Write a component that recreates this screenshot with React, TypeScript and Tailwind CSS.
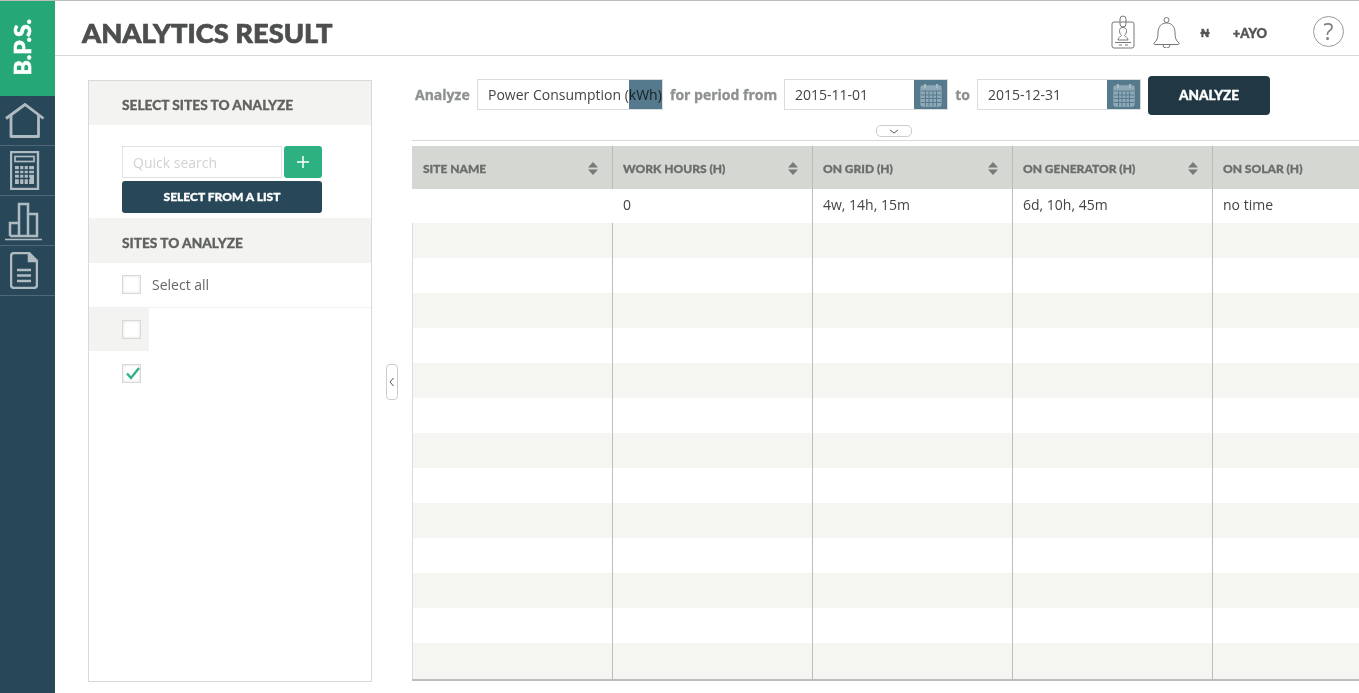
const heading = "font-['Lato','Liberation_Sans',sans-serif]";
const body = "font-['Open_Sans','Liberation_Sans',sans-serif]";

const HomeIcon = () => (
  <svg width="40" height="36" viewBox="0 0 40 36" fill="none" stroke="#b0bbc1" strokeWidth="2.800">
    <path d="M1 15.5 20 1.500l18.500 14" />
    <path d="M6 12v21.500h27.500V12" strokeLinejoin="round" />
  </svg>
);

const CalculatorIcon = () => (
  <svg width="30" height="39" viewBox="0 0 30 39" fill="none" stroke="#b0bbc1" strokeWidth="2.400">
    <rect x="1" y="1" width="27" height="37" />
    <rect x="5" y="5.500" width="19" height="5" strokeWidth="1.700" />
    <path d="M5 15h19v18H5z" fill="#b0bbc1" stroke="none" />
    <path d="M5 19h19M5 23h19M5 27.500h19M9.500 15v18M14 15v18M18.500 15v18" stroke="#28485a" strokeWidth="1.300" />
    <path d="M22 24v9" stroke="#b0bbc1" strokeWidth="4" />
  </svg>
);

const ChartIcon = () => (
  <svg width="38" height="40" viewBox="0 0 38 40" fill="none" stroke="#b0bbc1" strokeWidth="2.500">
    <path d="M5 35V22h9M14 35V3h9v32M23 13h9v22H5" />
    <path d="M0 38.500h37" strokeWidth="1.600" />
  </svg>
);

const DocumentIcon = () => (
  <svg width="28" height="37" viewBox="0 0 28 37" fill="none" stroke="#b0bbc1" strokeWidth="2.500">
    <path d="M4 1h15l8 8v24a3 3 0 0 1-3 3H4a3 3 0 0 1-3-3V4a3 3 0 0 1 3-3z" strokeLinejoin="round" />
    <path d="M19 1v8h8" fill="#b0bbc1" />
    <path d="M7 18h14M7 23.500h14M7 29h14" />
  </svg>
);

const BadgeIcon = () => (
  <svg width="24" height="34" viewBox="0 0 24 34" fill="none" stroke="#777" strokeWidth="1">
    <rect x="1" y="7" width="22" height="26" rx="2" />
    <rect x="9" y="1" width="6" height="11" rx="3" />
    <path d="M4 27.500h16M8 30h3M14 30h3" />
    <path d="M7 25c0-3 3-3 3.500-4.500-1.500-1.500-2-3-2-5 0-2 1.500-3 3.500-3s3.500 1 3.500 3c0 2-.5 3.500-2 5 .5 1.500 3.500 1.500 3.500 4.500z" />
  </svg>
);

const BellIcon = () => (
  <svg width="27" height="32" viewBox="0 0 27 32" fill="none" stroke="#777" strokeWidth="1">
    <path d="M1 27c3-2.500 4-5 4-10 0-6 3-10 8.500-10S22 11 22 17c0 5 1 7.500 4 10 .5 1-.5 1.500-1 1.500H2c-.5 0-1.500-.5-1-1.500z" />
    <circle cx="13.500" cy="4" r="2.500" />
    <path d="M10 29a3.500 3 0 0 0 7 0" />
  </svg>
);

const CalendarIcon = () => (
  <svg width="22" height="24" viewBox="0 0 22 24" fill="none" stroke="#a5bac6" strokeWidth="1.300">
    <rect x="1" y="3" width="20" height="20" rx="1.500" fill="#8fa9b7" stroke="#8fa9b7" />
    <path d="M1 8h20M1 12h20M1 15.500h20M1 19.500h20M5.500 8v15M9 8v15M13 8v15M16.500 8v15" stroke="#567a8d" strokeWidth="1" />
    <path d="M5 1v4M17 1v4" stroke="#a5bac6" strokeWidth="2" />
  </svg>
);

const SortIcon = () => (
  <svg width="10" height="13" viewBox="0 0 10 13" fill="#777a76" className="shrink-0">
    <path d="M5 0l5 5.500H0zM5 13l5-5.500H0z" />
  </svg>
);

const Chevron = ({ d, w, h }: { d: string; w: number; h: number }) => (
  <svg width={w} height={h} viewBox={`0 0 ${w} ${h}`} fill="none" stroke="#555" strokeWidth="1">
    <path d={d} />
  </svg>
);

const Checkbox = ({ checked }: { checked?: boolean }) => (
  <div className="relative w-[19px] h-[19px] bg-white border border-[#d8d8d8] shadow-[inset_0_0_3px_#dcdcdc]">
    {checked && (
      <svg className="absolute left-[3px] top-[2px]" width="14" height="13" viewBox="0 0 14 13" fill="none" stroke="#2eb184" strokeWidth="2.400">
        <path d="M1 6.500l4 4.500 8-10" />
      </svg>
    )}
  </div>
);

const DateInput = ({ value }: { value: string }) => (
  <div className={`flex w-[164px] h-[31px] bg-white border border-[#dcdcdc] ${body}`}>
    <div className="flex-1 pl-[10px] text-[14px] leading-[29px] text-[#444]">{value}</div>
    <div className="w-[33px] bg-[#567a8d] flex items-center justify-center">
      <CalendarIcon />
    </div>
  </div>
);

const navItems = [
  { icon: <HomeIcon />, key: 'home', pad: 'pl-[5px]' },
  { icon: <CalculatorIcon />, key: 'calc', pad: 'pl-[10px]' },
  { icon: <ChartIcon />, key: 'chart', pad: 'pl-[5px]' },
  { icon: <DocumentIcon />, key: 'doc', pad: 'pl-[10px]' },
];

const columns = [
  { title: 'SITE NAME', w: 'w-[201px] pl-[11px]', value: '' },
  { title: 'WORK HOURS (H)', w: 'w-[200px] pl-[10px]', value: '0' },
  { title: 'ON GRID (H)', w: 'w-[200px] pl-[10px]', value: '4w, 14h, 15m' },
  { title: 'ON GENERATOR (H)', w: 'w-[200px] pl-[10px]', value: '6d, 10h, 45m' },
  { title: 'ON SOLAR (H)', w: 'flex-1 pl-[10px]', value: 'no time' },
];

const stripes = Array.from({ length: 13 }, (_, i) => i);

export default function App() {
  return (
    <div className={`w-[1359px] h-[693px] overflow-hidden bg-white border-t border-[#bdbdbd] flex ${body}`}>
      {/* sidebar */}
      <div className="w-[55px] shrink-0 bg-[#28485a] flex flex-col">
        <div className="h-[95px] bg-[#25a875] flex items-center justify-center">
          <span className={`${heading} -rotate-90 text-white font-black text-[23px] [-webkit-text-stroke:0.6px_#fff] whitespace-nowrap -mt-[3px] -ml-[11px]`}>B.P.S.</span>
        </div>
        {navItems.map((item) => (
          <div key={item.key} className={`h-[50px] border-b border-[#4d6877] flex items-center ${item.pad}`}>
            {item.icon}
          </div>
        ))}
      </div>

      <div className="flex-1 min-w-0 flex flex-col">
        {/* header */}
        <div className="h-[55px] shrink-0 border-b border-[#d8d8d8] flex items-center pl-[27px]">
          <h1 className={`${heading} font-black text-[27.3px] leading-none text-[#4c4f4d] [-webkit-text-stroke:0.7px_#4c4f4d] mt-[9px]`}>ANALYTICS RESULT</h1>
          <div className="ml-auto flex items-center pt-[7px]">
            <div className="mr-[18px] mt-[1px]"><BadgeIcon /></div>
            <div className="mr-[20px]"><BellIcon /></div>
            <span className={`${heading} font-black text-[12px] text-[#555] [-webkit-text-stroke:0.4px_#555] mr-[23px] mt-[3px]`}>₦</span>
            <span className={`${heading} font-black text-[13px] text-[#555] [-webkit-text-stroke:0.4px_#555] mr-[46px] mt-[5px]`}>+AYO</span>
            <div className="w-[31px] h-[31px] mr-[15px] rounded-full border border-[#999] flex items-center justify-center text-[23px] text-[#808080]">?</div>
          </div>
        </div>

        <div className="flex-1 min-h-0 flex">
          {/* site picker */}
          <div className="w-[284px] h-[602px] mt-[24px] ml-[33px] shrink-0 border border-[#d9d9d9]">
            <div className={`h-[44px] bg-[#f3f4f2] pl-[33px] pt-[4px] flex items-center ${heading} font-black text-[13.7px] text-[#5f625f] [-webkit-text-stroke:0.3px_#5f625f]`}>SELECT SITES TO ANALYZE</div>
            <div className="pl-[33px] pt-[21px] pb-[5px]">
              <div className="flex gap-[2px]">
                <div className="w-[160px] h-[32px] border border-[#e2e2e2] pl-[10px] text-[14px] leading-[32px] text-[#d2d2d2]">Quick search</div>
                <div className="w-[38px] h-[32px] bg-[#2eb180] rounded-[3px] flex items-center justify-center">
                  <svg width="12" height="12" viewBox="0 0 12 12" stroke="#fff" strokeWidth="1.500"><path d="M6 0v12M0 6h12" /></svg>
                </div>
              </div>
              <div className={`mt-[3px] w-[200px] h-[32px] bg-[#28485a] rounded-[3px] flex items-center justify-center ${heading} font-black text-[12px] text-white [-webkit-text-stroke:0.3px_#fff]`}>SELECT FROM A LIST</div>
            </div>
            <div className={`h-[45px] bg-[#f3f4f2] pl-[33px] pt-[6px] flex items-center ${heading} font-black text-[13.7px] text-[#5f625f] [-webkit-text-stroke:0.3px_#5f625f]`}>SITES TO ANALYZE</div>
            <div className="h-[45px] pl-[33px] pb-[2px] flex items-center gap-[11px] border-b border-[#f0f0f0] text-[14px] text-[#666]">
              <Checkbox />
              <span>Select all</span>
            </div>
            <div className="w-[60px] h-[43px] pl-[33px] pb-[1px] bg-[#f3f4f2] flex items-center"><Checkbox /></div>
            <div className="h-[44px] pl-[33px] flex items-center"><Checkbox checked /></div>
          </div>

          {/* collapse handle */}
          <div className="w-[40px] shrink-0 flex justify-center pt-[308px]">
            <div className="w-[12px] h-[36px] border border-[#ccc] rounded-[4px] flex items-center justify-center">
              <Chevron d="M4.500 1 1 5l3.500 4" w={6} h={10} />
            </div>
          </div>

          {/* results */}
          <div className="flex-1 min-w-0 flex flex-col">
            <div className="h-[64px] flex items-start pt-[20px] pl-[3px] shrink-0">
              <span className="font-bold text-[14px] leading-[37px] text-[#8d918e] [-webkit-text-stroke:0.3px_#8d918e] w-[62px]">Analyze</span>
              <div className="relative w-[186px] h-[31px] mt-[3px] border border-[#dcdcdc] bg-white pl-[10px] text-[14px] leading-[29px] text-[#444] whitespace-nowrap">
                Power Consumption (kWh)
                <div className="absolute right-0 top-0 w-[33px] h-[29px] bg-[#567a8d] mix-blend-multiply" />
              </div>
              <span className="font-bold text-[14px] leading-[37px] text-[#8d918e] [-webkit-text-stroke:0.3px_#8d918e] ml-[7px] w-[114px] whitespace-nowrap">for period from</span>
              <div className="mt-[3px]"><DateInput value="2015-11-01" /></div>
              <span className="font-bold text-[14px] leading-[37px] text-[#8d918e] [-webkit-text-stroke:0.3px_#8d918e] w-[29px] text-center">to</span>
              <div className="mt-[3px]"><DateInput value="2015-12-31" /></div>
              <div className={`ml-[7px] w-[122px] h-[39px] bg-[#213743] rounded-[4px] flex items-center justify-center ${heading} font-black text-[13.5px] text-white [-webkit-text-stroke:0.4px_#fff]`}>ANALYZE</div>
            </div>

            <div className="h-[6px] shrink-0" />
            <div className="relative h-[15px] shrink-0 border-b border-[#d8d8d8]">
              <div className="absolute left-[464px] -top-[1px] w-[36px] h-[12px] border border-[#ccc] rounded-[5px] flex items-center justify-center bg-white">
                <Chevron d="M1 1l4 3 4-3" w={10} h={5} />
              </div>
            </div>
            <div className="h-[5px] shrink-0" />

            <div className={`flex h-[43px] shrink-0 bg-[#d5d7d3] ${heading}`}>
              {columns.map((c, i) => (
                <div key={c.title} className={`${c.w} flex items-center pt-[2px] pr-[14px] justify-between font-black text-[12px] text-[#6b6e6b] [-webkit-text-stroke:0.3px_#6b6e6b] ${i < 4 ? 'border-r border-[#b9bbb8]' : ''}`}>
                  <span>{c.title}</span>
                  {i < 4 && <SortIcon />}
                </div>
              ))}
            </div>
            <div className="flex h-[34px] shrink-0">
              {columns.map((c, i) => (
                <div key={c.title} className={`${c.w} text-[14px] leading-[32px] text-[#444] ${i > 0 && i < 4 ? 'border-r border-[#bdbdbd]' : ''}`}>
                  {c.value}
                </div>
              ))}
            </div>
            <div className="border-b-2 border-[#bdbdbd]">
              {stripes.map((n) => (
                <div key={n} className={`flex ${n === 12 ? 'h-[36px]' : 'h-[35px]'} ${n % 2 === 0 ? 'bg-[#f5f6f2]' : 'bg-white'}`}>
                  {columns.map((c, i) => (
                    <div key={c.title} className={`${c.w} ${i < 4 ? 'border-r border-r-[#bdbdbd]' : ''} ${i === 0 ? 'border-l border-l-[#dcdcdc]' : ''}`} />
                  ))}
                </div>
              ))}
            </div>
          </div>
        </div>
      </div>
    </div>
  );
}
